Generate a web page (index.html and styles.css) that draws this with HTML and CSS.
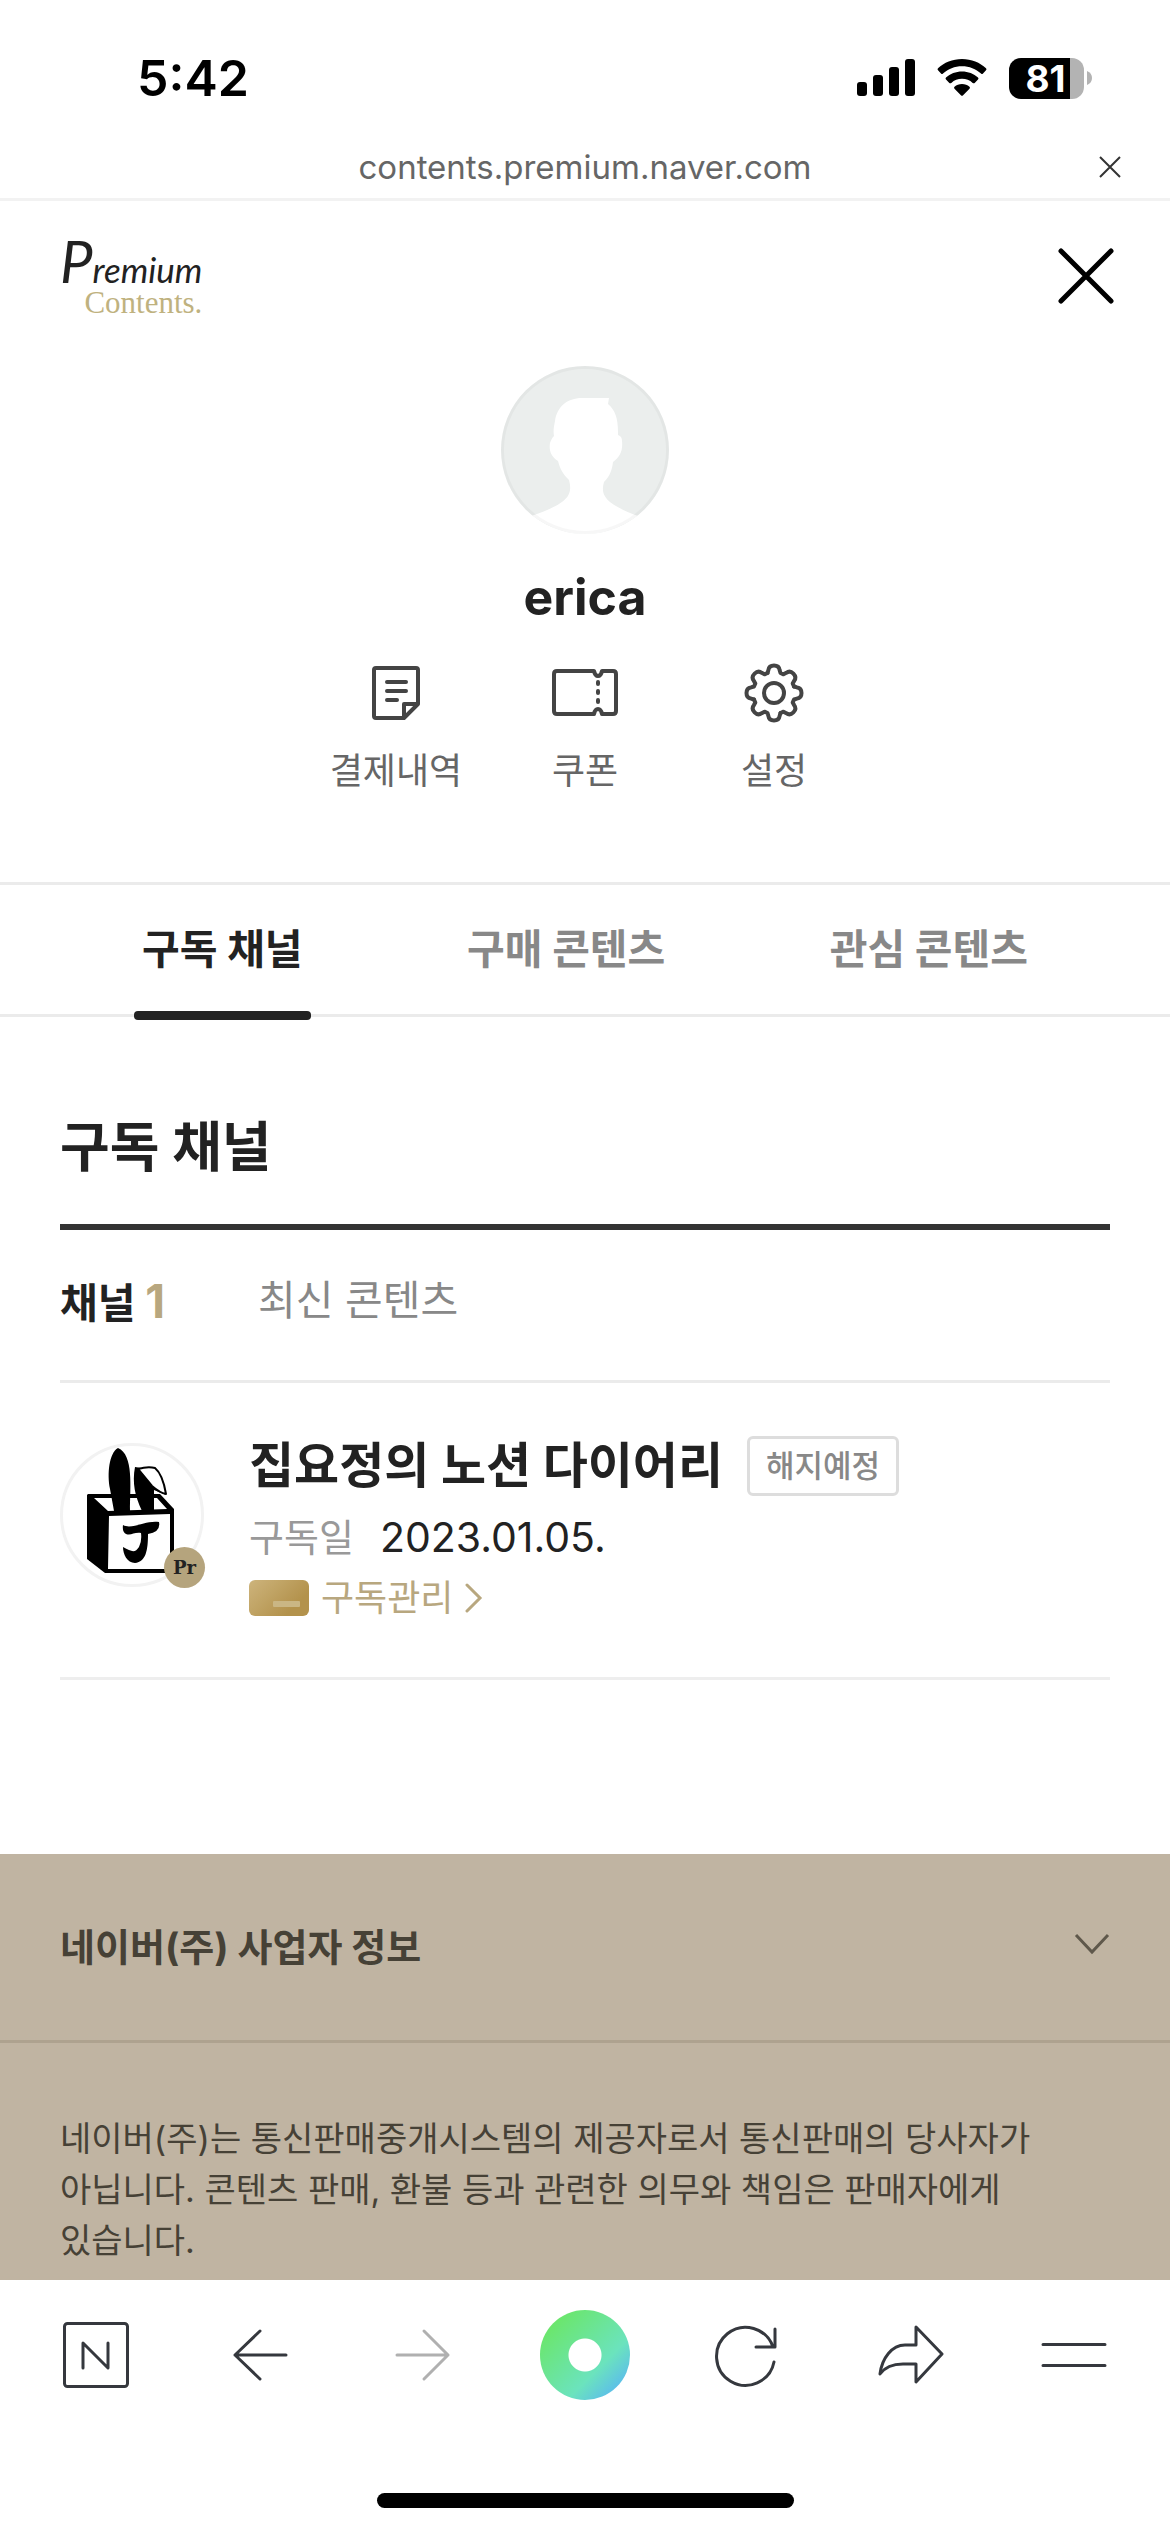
FILE: index.html
```html
<!DOCTYPE html>
<html lang="ko">
<head>
<meta charset="utf-8">
<meta name="viewport" content="width=device-width, initial-scale=1">
<title>구독 채널</title>
<link rel="stylesheet" href="styles.css">
</head>
<body>
<div class="status">
  <time class="status-time">5:42</time>
  <div class="status-icons">
    <svg width="58" height="38" viewBox="0 0 58 38" aria-hidden="true"><rect x="0" y="23" width="10" height="14" rx="3"/><rect x="16" y="16" width="10" height="21" rx="3"/><rect x="32" y="8" width="10" height="29" rx="3"/><rect x="48" y="0" width="10" height="37" rx="3"/></svg>
    <svg width="50" height="38" viewBox="0 0 50 38" aria-hidden="true"><path d="M25 0C15.500 0 7 3.500 1 9.300q-1 1 0 2L4 14.500q1 1 2 0C11 9.800 17.700 7.200 25 7.200s14 2.600 19 7.300q1 1 2 0l3-3.200q1-1 0-2C43 3.500 34.500 0 25 0Z"/><path d="M25 12.500c-6.200 0-11.800 2.300-16 6.100q-1 1 0 2l3.300 3.300q1 .9 2 0c2.900-2.600 6.600-4.100 10.700-4.100s7.800 1.500 10.700 4.100q1 .9 2 0l3.300-3.300q1-1 0-2c-4.200-3.800-9.800-6.100-16-6.100Z"/><path d="M25 25c-2.900 0-5.500 1-7.500 2.700q-1 1 0 2l6.400 6.500q1.100 1 2.200 0l6.400-6.500q1-1 0-2C30.500 26 27.900 25 25 25Z"/></svg>
    <div class="battery"><span class="battery-body">81</span><svg width="5" height="16" viewBox="0 0 5 16" aria-hidden="true"><path d="M0 1q5 2 5 7t-5 7Z"/></svg></div>
  </div>
</div>
<div class="address">
  <span class="address-url">contents.premium.naver.com</span>
  <button class="address-close" aria-label="닫기"><svg width="24" height="24" viewBox="0 0 24 24"><path d="m2 2 20 20M22 2 2 22"/></svg></button>
</div>

<header class="header">
  <a class="logo" href="#"><span class="logo-top"><span class="logo-initial">P</span>remium</span><span class="logo-sub">Contents.</span></a>
  <button class="close" aria-label="메뉴 닫기"><svg width="56" height="56" viewBox="0 0 56 56"><path d="m3 3 50 50M53 3 3 53"/></svg></button>
</header>

<main>
  <section class="profile">
    <svg class="profile-photo" width="168" height="168" viewBox="0 0 168 168" aria-hidden="true">
      <defs><clipPath id="photo"><circle cx="84" cy="84" r="84"/></clipPath></defs>
      <g clip-path="url(#photo)">
        <path fill="#ebeeed" d="M0 0h168v168H0z"/>
        <path fill="#fff" d="M53 70c-1-5 0-10 1-15 2-14 12-23 27-23h27l-1 6c7 6 10 14 10 28v3c3 1 4 3 4 6 1 10-2 16-9 21-1 8-3 14-9 20-4 14 2 22 34 34l5 2v25H28v-26l5-2c34-12 39-20 35-35-6-6-9-11-11-19-8-5-9-12-8-18 1-3 2-5 4-7Z"/>
      </g>
      <circle cx="84" cy="84" r="82.500" fill="none" stroke="#000" stroke-opacity=".03" stroke-width="3"/>
    </svg>
    <h1 class="profile-name">erica</h1>
    <nav class="actions">
      <a class="action" href="#"><svg width="66" height="60" viewBox="0 0 66 60" aria-hidden="true"><path d="M13 5h40q2 0 2 2v34L41 55H13q-2 0-2-2V7q0-2 2-2Z"/><path d="M54 41H41v13M24 19h19M24 28h19M24 37h10"/></svg>결제내역</a>
      <a class="action" href="#"><svg width="66" height="60" viewBox="0 0 66 60" aria-hidden="true"><path d="M5 8h37q1 5 4 5t4-5h11q3 0 3 3v37q0 3-3 3H50q-1-5-4-5t-4 5H5q-3 0-3-3V11q0-3 3-3Z"/><path d="M46 19v2M46 28v2M46 37v2"/></svg>쿠폰</a>
      <a class="action" href="#"><svg width="66" height="60" viewBox="-33 -30 66 60" aria-hidden="true"><defs><path id="cog" d="M-6.500-20-5.600-23Q-5-27.500 0-27.500T5.600-23L6.500-20 9.500-18.700 12.300-20.200Q15.900-23 19.400-19.400T20.200-12.300L18.700-9.500 20-6.500"/></defs><use href="#cog"/><use href="#cog" transform="rotate(90)"/><use href="#cog" transform="rotate(180)"/><use href="#cog" transform="rotate(270)"/><circle r="10"/></svg>설정</a>
    </nav>
  </section>

  <nav class="tabs">
    <a class="tab tab-on" href="#" aria-current="page">구독 채널</a>
    <a class="tab" href="#">구매 콘텐츠</a>
    <a class="tab" href="#">관심 콘텐츠</a>
  </nav>

  <section class="channels">
    <h2 class="channels-title">구독 채널</h2>
    <nav class="filters">
      <a class="filter filter-on" href="#">채널 <span class="filter-count">1</span></a>
      <a class="filter" href="#">최신 콘텐츠</a>
    </nav>
    <article class="channel">
      <div class="channel-photo">
        <svg width="138" height="138" viewBox="3 3 138 138" aria-hidden="true">
          <path d="M28 51h72l14 15v64H45l-18-14V52Z"/>
          <path fill="#fff" d="M34 55h63l10 11-59 2ZM49 73l61-2v55H48Z"/>
          <path d="M58 5c-9 5-11 26-8 41l4 22h16c0-24 4-56-12-63ZM75 24c-3 16 0 29 7 44h12V47l12 5-18-26Z"/>
          <path d="M78 26q10-3 17-1c6 5 9 14 11 26q-6-1-14-8L78 26Z" fill="#fff" stroke="#000" stroke-width="2" stroke-linejoin="round"/>
          <path d="M63 82c9 5 22-5 36-3q2 10-11 12c0 16-2 28-13 29-8 0-12-9-12-16 9 5 12 6 16 0q3-6 2-14c-7-1-10 3-15 1q-4-2-3-9Z"/>
        </svg>
        <span class="channel-mark">Pr</span>
      </div>
      <div class="channel-body">
        <div class="channel-head"><h3 class="channel-name">집요정의 노션 다이어리</h3><span class="channel-state">해지예정</span></div>
        <p class="channel-date"><span class="channel-label">구독일</span><time>2023.01.05.</time></p>
        <a class="channel-manage" href="#"><span class="card-icon"></span>구독관리<svg width="18" height="32" viewBox="0 0 18 32" aria-hidden="true"><path d="m2 3 13 13L2 29"/></svg></a>
      </div>
    </article>
  </section>
</main>

<footer class="footer">
  <button class="company">네이버(주) 사업자 정보<svg width="36" height="22" viewBox="0 0 36 22" aria-hidden="true"><path d="m2 2 16 17L34 2"/></svg></button>
  <p class="notice">네이버(주)는 통신판매중개시스템의 제공자로서 통신판매의 당사자가 아닙니다. 콘텐츠 판매, 환불 등과 관련한 의무와 책임은 판매자에게 있습니다.</p>
</footer>

<div class="toolbar">
  <nav class="toolbar-row">
    <button class="tool" aria-label="네이버 홈"><svg width="66" height="66" viewBox="0 0 66 66"><rect x="1.500" y="1.500" width="63" height="63" rx="3"/><path d="M20 46V21l25 25V21"/></svg></button>
    <button class="tool" aria-label="뒤로"><svg width="66" height="66" viewBox="0 0 66 66"><path d="M60 33H9M34 9 9 33l25 24"/></svg></button>
    <button class="tool tool-off" aria-label="앞으로" disabled><svg width="66" height="66" viewBox="0 0 66 66"><path d="M8 33h51M35 9l24 24-24 24"/></svg></button>
    <button class="tool tool-dot" aria-label="그린닷"></button>
    <button class="tool" aria-label="새로고침"><svg width="66" height="66" viewBox="0 0 66 66"><path d="M59 40A29 29 0 1 1 58 25M60 7v18H41"/></svg></button>
    <button class="tool" aria-label="공유"><svg width="66" height="66" viewBox="0 0 66 66"><path d="m38 5 26 27-26 28V42H25C14 42 7 45 2 52 4 36 14 23 27 23h11Z"/></svg></button>
    <button class="tool" aria-label="메뉴"><svg width="66" height="66" viewBox="0 0 66 66"><path d="M2 22.500h62M2 43.500h62"/></svg></button>
  </nav>
  <div class="home-bar"></div>
</div>
</body>
</html>
```
FILE: styles.css
```css
* { box-sizing: border-box; margin: 0; padding: 0; }

body {
  display: flex;
  flex-direction: column;
  min-height: 100vh;
  background: #fff;
  color: #222;
  font-family: Inter, "Noto Sans CJK KR", sans-serif;
}

a { color: inherit; text-decoration: none; }
button { border: 0; background: none; color: inherit; font: inherit; }
svg { display: block; flex: none; }

/* Device status bar */
.status {
  display: flex;
  align-items: center;
  justify-content: space-between;
  height: 135px;
  padding: 21px 78px 0 137px;
  color: #000;
}
.status-time { font-size: 50px; font-weight: 600; }
.status-icons { display: flex; align-items: center; gap: 22px; }
.battery { display: flex; align-items: center; gap: 3px; }
.battery-body {
  width: 75px;
  padding-right: 2px;
  border-radius: 12px;
  background: linear-gradient(90deg, #000 61px, #b3b3b3 61px);
  color: #fff;
  font-size: 37px;
  font-weight: 700;
  line-height: 41px;
  text-align: center;
}
.battery path { fill: #b3b3b3; }

/* Address bar */
.address {
  position: relative;
  display: flex;
  align-items: center;
  justify-content: center;
  height: 66px;
  border-bottom: 3px solid #f2f2f2;
}
.address-url { color: #666; font-size: 33px; }
.address-close { position: absolute; right: 48px; }
.address-close path { stroke: #333; stroke-width: 2; }

/* Service header */
.header {
  display: flex;
  align-items: center;
  justify-content: space-between;
  height: 138px;
  padding: 12px 56px 0 60px;
}
.logo { display: flex; flex-direction: column; }
.logo-top {
  font-family: Lato, sans-serif;
  font-size: 35px;
  font-style: italic;
  line-height: 46px;
}
.logo-initial { font-size: 58px; line-height: 46px; }
.logo-sub {
  align-self: flex-end;
  color: #bfb27f;
  font-family: "Liberation Serif", serif;
  font-size: 31px;
  line-height: 22px;
}
.close path { stroke: #000; stroke-width: 5; stroke-linecap: round; }

/* Profile */
.profile {
  display: flex;
  flex-direction: column;
  align-items: center;
  padding: 27px 60px 87px;
}
.profile-name { margin-top: 30px; font-size: 50px; font-weight: 700; line-height: 66px; }
.actions { display: flex; margin-top: 33px; }
.action {
  display: flex;
  flex-direction: column;
  align-items: center;
  gap: 24px;
  width: 189px;
  color: #666;
  font-size: 36px;
  line-height: 48px;
}
.action svg { fill: none; stroke: #444; stroke-width: 4; stroke-linecap: round; stroke-linejoin: round; }

/* Tabs */
.tabs {
  display: flex;
  justify-content: space-between;
  padding: 0 134px;
  border: solid #ebebeb;
  border-width: 3px 0;
}
.tab {
  position: relative;
  padding: 0 8px;
  color: #888;
  font-size: 41px;
  font-weight: 700;
  line-height: 129px;
}
.tab-on { color: #222; }
.tab-on::after {
  content: "";
  position: absolute;
  inset: auto 0 -6px;
  height: 9px;
  border-radius: 4px;
  background: #222;
}

/* Subscribed channels */
.channels { padding: 96px 60px 174px; }
.channels-title {
  padding-bottom: 41px;
  border-bottom: 6px solid #333;
  font-size: 54px;
  font-weight: 700;
  line-height: 70px;
}
.filters {
  display: flex;
  align-items: flex-start;
  gap: 93px;
  padding: 43px 0 47px;
  border-bottom: 3px solid #ebebeb;
}
.filter { color: #888; font-size: 41px; line-height: 54px; }
.filter-on { color: #222; font-weight: 700; line-height: 60px; }
.filter-count { color: #b8a77f; font-size: 46px; line-height: 46px; }

.channel {
  display: flex;
  gap: 45px;
  padding: 53px 0;
  border-bottom: 3px solid #eee;
}
.channel-photo {
  position: relative;
  flex: none;
  width: 144px;
  height: 144px;
  margin-top: 7px;
  border: 3px solid #f2f2f2;
  border-radius: 50%;
}
.channel-mark {
  position: absolute;
  right: -4px;
  bottom: -4px;
  width: 41px;
  height: 41px;
  border-radius: 50%;
  background: #b5a47d;
  font: 700 18px/41px "DejaVu Serif", serif;
  text-align: center;
}
.channel-body { flex: 1; }
.channel-head { display: flex; align-items: center; gap: 24px; }
.channel-name { font-size: 49px; font-weight: 700; line-height: 60px; }
.channel-state {
  padding: 0 16px;
  border: 3px solid #ddd;
  border-radius: 6px;
  color: #888;
  font-size: 31px;
  font-weight: 500;
  line-height: 54px;
}
.channel-date {
  display: flex;
  align-items: center;
  gap: 26px;
  margin-top: 16px;
  font-size: 41px;
  line-height: 50px;
}
.channel-label { color: #999; font-size: 38px; }
.channel-manage {
  display: flex;
  align-items: center;
  gap: 12px;
  width: fit-content;
  margin-top: 10px;
  color: #b8a77f;
  font-size: 36px;
  line-height: 52px;
}
.channel-manage path { fill: none; stroke: #b8a77f; stroke-width: 3; stroke-linecap: round; }
.card-icon {
  display: flex;
  align-items: flex-end;
  justify-content: flex-end;
  width: 60px;
  height: 36px;
  padding: 9px;
  border-radius: 6px;
  background: linear-gradient(135deg, #cdb47c, #b3924c 75%);
}
.card-icon::after { content: ""; width: 27px; height: 6px; border-radius: 1px; background: #cab684; }

/* Footer */
.footer { flex: 1; background: #c0b4a2; color: #464136; }
.company {
  display: flex;
  align-items: center;
  justify-content: space-between;
  width: 100%;
  height: 189px;
  padding: 0 60px 6px;
  border-bottom: 3px solid #aea28f;
  font-size: 38px;
  font-weight: 700;
}
.company path { fill: none; stroke: #5f584b; stroke-width: 3; }
.notice {
  padding: 70px 60px 14px;
  font-size: 34px;
  line-height: 51px;
  word-break: keep-all;
}

/* Browser toolbar */
.toolbar { padding-bottom: 24px; background: #fff; }
.toolbar-row {
  display: flex;
  align-items: center;
  justify-content: space-between;
  height: 150px;
  padding: 0 51px;
}
.tool { display: flex; align-items: center; justify-content: center; width: 90px; height: 90px; }
.tool svg { fill: none; stroke: #35383e; stroke-width: 3; stroke-linecap: round; stroke-linejoin: round; }
.tool-off svg { stroke: #b0b0b0; }
.tool-dot {
  border-radius: 50%;
  background: radial-gradient(circle, #fff 16px, transparent 17px), linear-gradient(135deg, #6be66c 15%, #6be3bd 65%, #5ab9f0 90%);
}
.home-bar { width: 417px; height: 15px; margin: 63px auto 0; border-radius: 8px; background: #000; }
```
